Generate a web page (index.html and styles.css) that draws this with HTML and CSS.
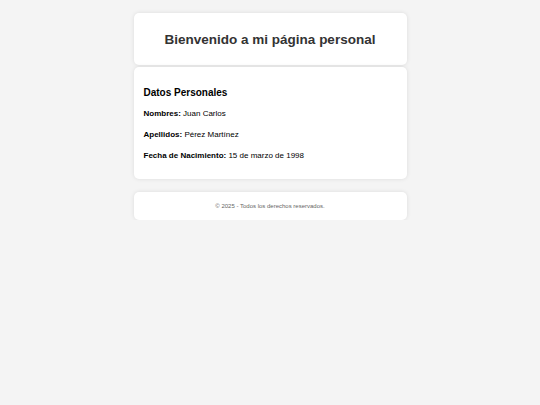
FILE: index.html
```html
<!DOCTYPE html>
<html lang="es">
<head>
<meta charset="utf-8">
<title>Mi página personal</title>
<link rel="stylesheet" href="styles.css">
</head>
<body>
<div class="container">
  <header class="card header">
    <h1>Bienvenido a mi página personal</h1>
  </header>
  <section class="card datos">
    <h2>Datos Personales</h2>
    <p><strong>Nombres:</strong> Juan Carlos</p>
    <p><strong>Apellidos:</strong> Pérez Martínez</p>
    <p><strong>Fecha de Nacimiento:</strong> 15 de marzo de 1998</p>
  </section>
  <footer class="card footer">
    <p>© 2025 - Todos los derechos reservados.</p>
  </footer>
</div>
</body>
</html>
```
FILE: styles.css
```css
html, body {
  margin: 0;
  padding: 0;
}
body {
  background: #f4f4f4;
  font-family: "Liberation Sans", Arial, sans-serif;
  color: #000;
}
.container {
  width: 273px;
  margin: 13px auto 0;
  display: flex;
  flex-direction: column;
}
.card {
  background: #fff;
  border-radius: 5px;
  box-shadow: 0 0 4px rgba(0, 0, 0, 0.1);
}
.header {
  padding: 19px 10px 17px;
  text-align: center;
}
.header h1 {
  margin: 0;
  font-size: 13.5px;
  line-height: 16px;
  font-weight: bold;
  color: #333;
}
.datos {
  margin-top: 2px;
  padding: 10px 10px 8.4px;
}
.datos h2 {
  margin: 10px 0 8px;
  font-size: 10px;
  line-height: 12px;
  font-weight: bold;
}
.datos p {
  margin: 8px 0;
  font-size: 8px;
  line-height: 13.2px;
}
.footer {
  margin-top: 13px;
  padding: 10px;
  text-align: center;
}
.footer p {
  margin: 0;
  font-size: 6px;
  line-height: 8px;
  color: #666;
}
```
